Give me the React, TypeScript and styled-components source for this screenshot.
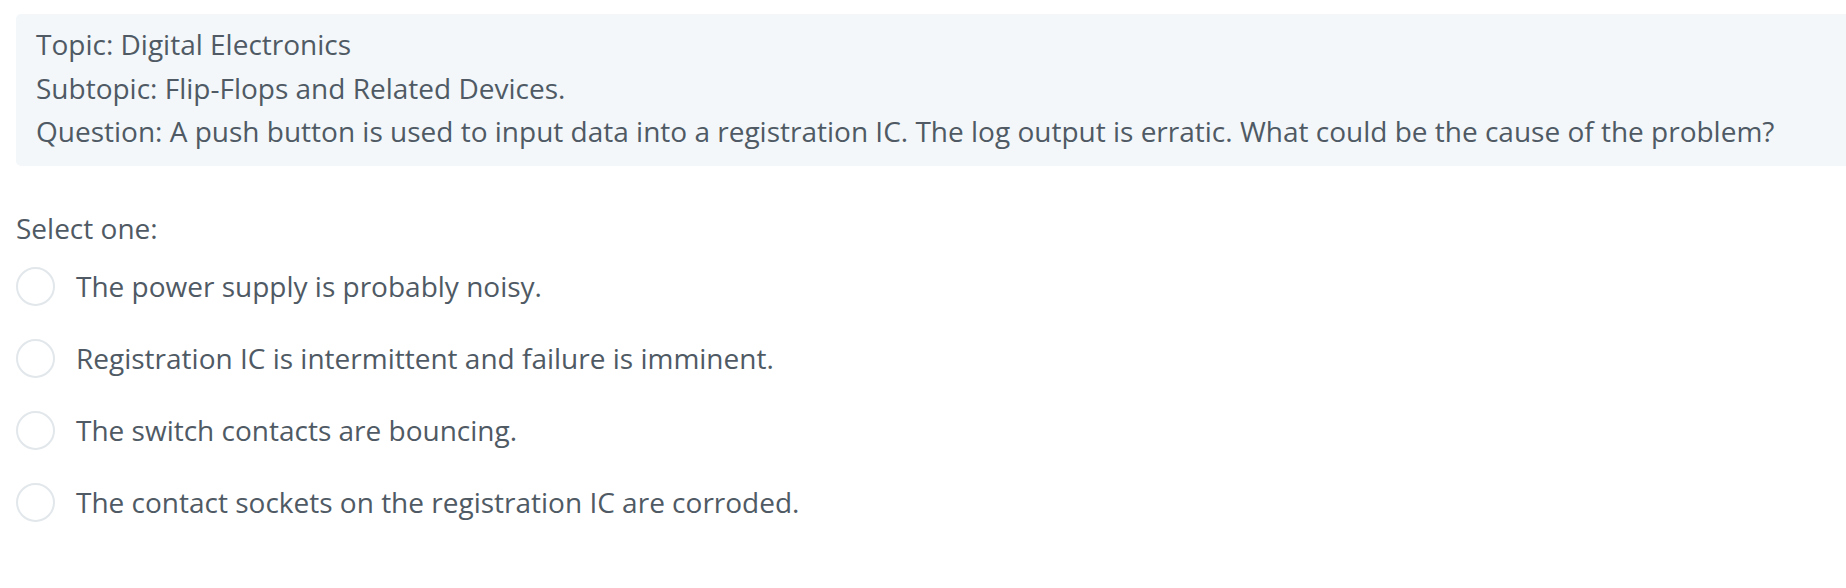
import React from "react";
import styled, { createGlobalStyle } from "styled-components";

const GlobalStyle = createGlobalStyle`
  html, body {
    margin: 0;
    padding: 0;
    background: #ffffff;
    overflow: hidden;
  }
  body {
    font-family: "Open Sans", "Noto Sans", sans-serif;
    color: #4f5a64;
  }
`;

const Page = styled.div`
  padding: 14px 0 0 16px;
`;

const Formulation = styled.div`
  background: #f3f7fa;
  border-radius: 5px 0 0 5px;
  padding: 9px 0 12px 20px;
  margin-right: -20px;
  font-size: 28px;
  line-height: 43.5px;
`;

const Line = styled.div``;

const Prompt = styled.div`
  margin-top: 41px;
  font-size: 28px;
  line-height: 43.5px;
`;

const Answers = styled.div`
  display: flex;
  flex-direction: column;
`;

const Option = styled.label`
  display: flex;
  align-items: center;
  gap: 21px;
  height: 72px;
  font-size: 28px;
  cursor: pointer;
`;

const Radio = styled.span`
  flex: none;
  width: 39px;
  height: 39px;
  box-sizing: border-box;
  border-radius: 50%;
  border: 2px solid #e2e7eb;
  background: #ffffff;
`;

const options = [
  "The power supply is probably noisy.",
  "Registration IC is intermittent and failure is imminent.",
  "The switch contacts are bouncing.",
  "The contact sockets on the registration IC are corroded.",
];

export default function App() {
  return (
    <Page>
      <GlobalStyle />
      <Formulation>
        <Line>Topic: Digital Electronics</Line>
        <Line>Subtopic: Flip-Flops and Related Devices.</Line>
        <Line>
          Question: A push button is used to input data into a registration IC. The log output is erratic. What could be the cause of the problem?
        </Line>
      </Formulation>
      <Prompt>Select one:</Prompt>
      <Answers>
        {options.map((text) => (
          <Option key={text}>
            <Radio />
            {text}
          </Option>
        ))}
      </Answers>
    </Page>
  );
}
